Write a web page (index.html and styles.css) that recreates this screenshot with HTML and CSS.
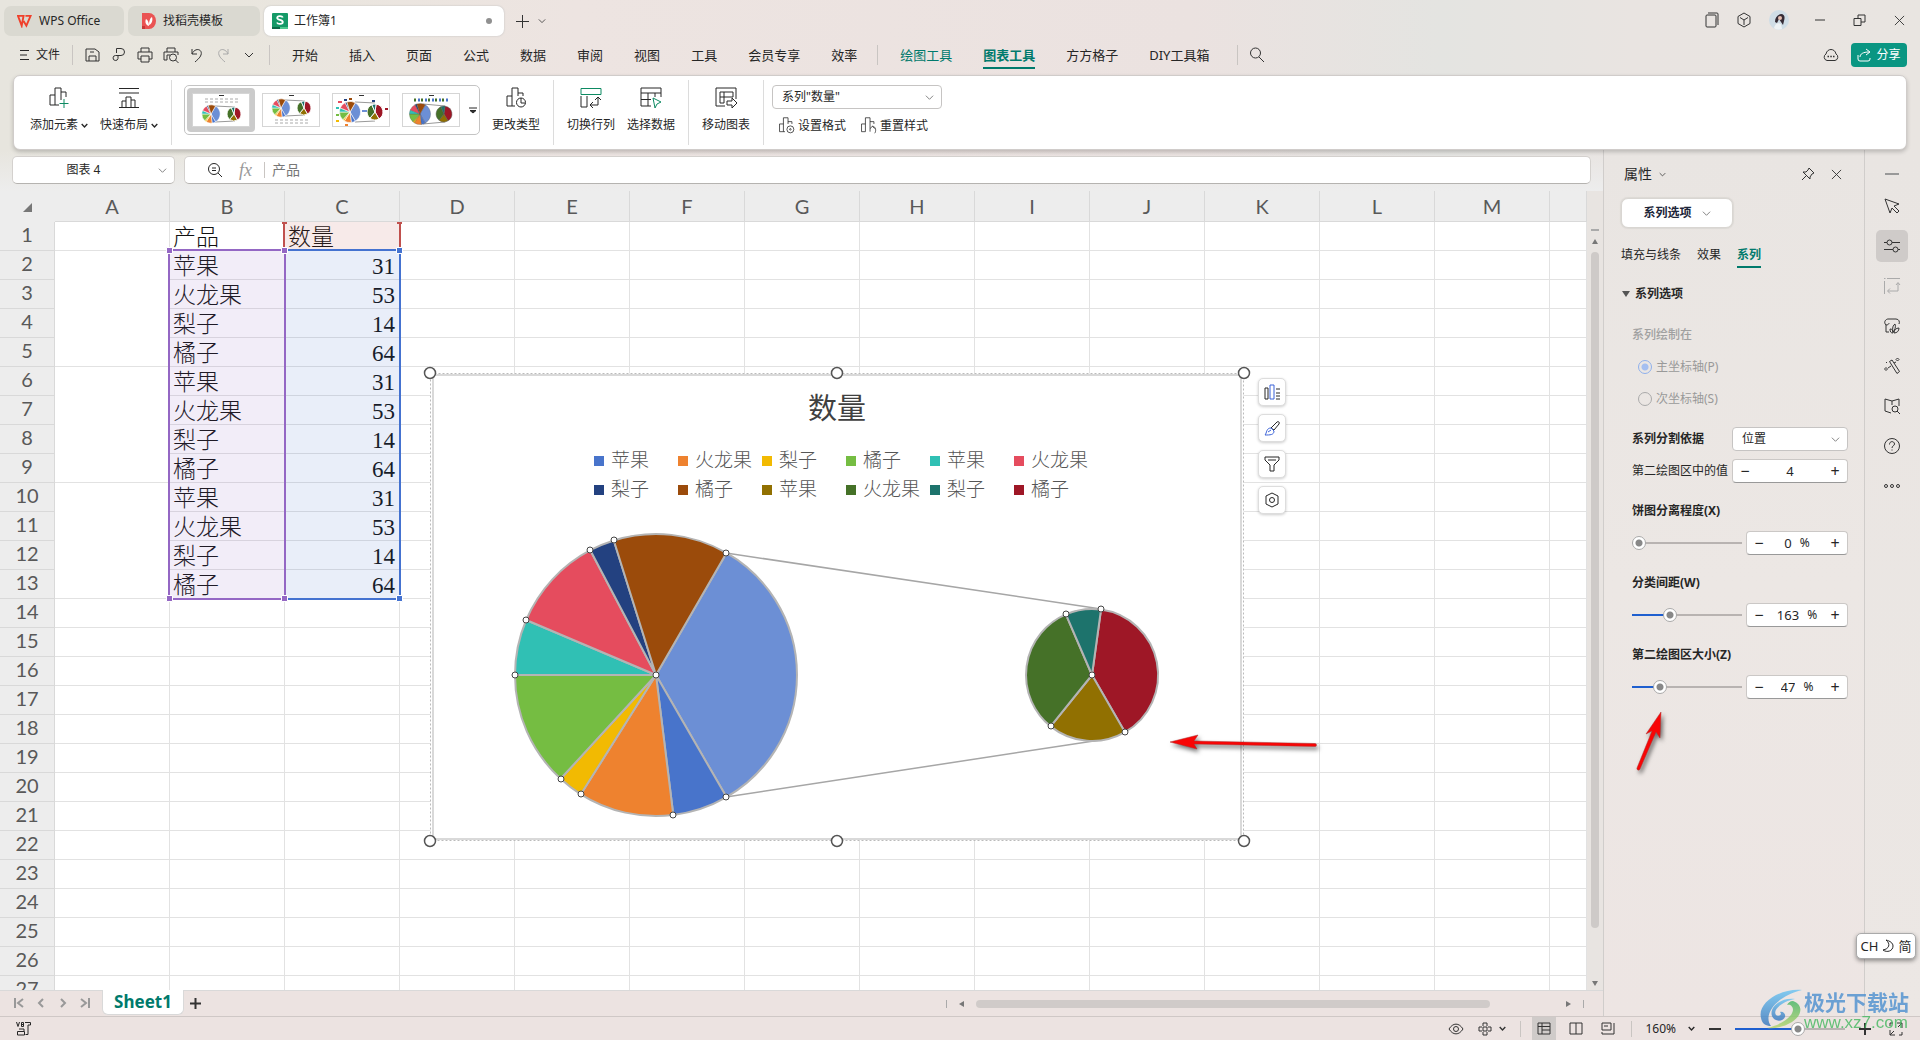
FILE: index.html
```html
<!DOCTYPE html>
<html lang="zh-CN">
<head>
<meta charset="utf-8">
<title>工作簿1 - WPS Office</title>
<link rel="stylesheet" href="styles.css">
</head>
<body>
<svg class="sprite" aria-hidden="true">
  <symbol id="chev" viewBox="0 0 10 10"><path d="M1 3l4 4 4-4"/></symbol>
  <symbol id="x" viewBox="0 0 12 12"><path d="M1 1l10 10M11 1L1 11"/></symbol>
  <symbol id="search" viewBox="0 0 16 16"><circle cx="6.500" cy="6" r="5"/><path d="M10 10l5 5"/></symbol>
  <g id="pie-main">
    <path fill="#6c8fd5" d="M0 0L70.5-122.100A141 141 0 0 1 70.500 122.100z"/>
    <path fill="#4874cb" d="M0 0L70.500 122.100A141 141 0 0 1 17.300 139.900z"/>
    <path fill="#ee822f" d="M0 0L17.300 139.900A141 141 0 0 1-75.200 119.300z"/>
    <path fill="#f2ba02" d="M0 0L-75.200 119.300A141 141 0 0 1-95.400 103.800z"/>
    <path fill="#75bd42" d="M0 0L-95.400 103.800A141 141 0 0 1-141 0z"/>
    <path fill="#30c0b4" d="M0 0L-141 0A141 141 0 0 1-129.800-55z"/>
    <path fill="#e54c5e" d="M0 0L-129.800-55A141 141 0 0 1-65.700-124.800z"/>
    <path fill="#234180" d="M0 0L-65.700-124.800A141 141 0 0 1-42.200-134.500z"/>
    <path fill="#9b4b0b" d="M0 0L-42.200-134.500A141 141 0 0 1 70.500-122.100z"/>
  </g>
  <g id="pie-second">
    <path fill="#9e1726" d="M0 0L9-65.400A66 66 0 0 1 33 57.200z"/>
    <path fill="#917001" d="M0 0L33 57.200A66 66 0 0 1-41.400 51.400z"/>
    <path fill="#457128" d="M0 0L-41.400 51.400A66 66 0 0 1-26.100-60.600z"/>
    <path fill="#1d736c" d="M0 0L-26.100-60.600A66 66 0 0 1 9-65.400z"/>
  </g>
</svg>

<header class="titlebar">
  <nav class="doc-tabs">
    <button class="doc-tab tab-home"><svg class="logo-wps" viewBox="0 0 16 14"><path fill="none" stroke="#f0402b" stroke-width="2" d="M1 1.500h6L5 12 1 1.500zM7 7l3 5 4.500-10.500H9"/></svg>WPS Office</button>
    <button class="doc-tab tab-docer"><svg class="logo-docer" viewBox="0 0 14 16"><path fill="#ea5353" d="M0 0h7a7 8 0 0 1 0 16H0z"/><path fill="#c63838" d="M0 13h3v3H0z"/><path fill="#fff" d="M7 13C3 12 3 8 4 6c2 1 3 4 3 7zM7 12c0-4 1-7 3-8 1 3 0 7-3 8z"/></svg>找稻壳模板</button>
    <button class="doc-tab tab-active"><svg class="logo-sheet" viewBox="0 0 16 16"><rect width="16" height="16" rx="1" fill="#159a68"/><path fill="#0b6b48" d="M0 14h8v2H0z"/><path fill="#4cc98d" d="M8 14h8v2H8z"/><path fill="none" stroke="#fff" stroke-width="1.800" d="M10.800 4.500C10 2.500 5.200 2.500 5.200 5c0 2.300 5.600 1.500 5.600 4 0 2.500-5 2.500-5.800.500"/></svg>工作簿1<i class="dirty"></i></button>
    <button class="icon-btn new-tab" aria-label="新建"><svg width="15" height="15" viewBox="0 0 15 15"><path d="M7.500 1v13M1 7.500h13"/></svg></button>
    <button class="icon-btn" aria-label="标签列表"><svg width="8" height="8"><use href="#chev"/></svg></button>
  </nav>
  <div class="window-tools">
    <button class="icon-btn" aria-label="窗口"><svg width="14" height="16" viewBox="0 0 14 16"><rect x="1" y="3" width="10" height="12" rx="1"/><path d="M3 1h9a1 1 0 0 1 1 1v11"/></svg></button>
    <button class="icon-btn" aria-label="应用"><svg width="16" height="16" viewBox="0 0 16 16"><path d="M8 1l6 3.500v7L8 15l-6-3.500v-7zM4 5.500L8 8l4-2.500M8 8v5"/></svg></button>
    <svg class="avatar" viewBox="0 0 20 20"><circle cx="10" cy="10" r="10" fill="#cfdde6"/><path fill="#352c36" d="M6 12c0-4 2-7 6-8 4 0 4 4 3 7l-1 4-2-3-2-3-2 4z"/><circle cx="11" cy="8" r="2" fill="#e5bfb1"/><path fill="#eef3f5" d="M5 18c1-4 4-6 7-4l1 5c-3 1-6 1-8-1z"/></svg>
    <button class="icon-btn" aria-label="最小化"><svg width="12" height="12" viewBox="0 0 12 12"><path d="M1 6h10"/></svg></button>
    <button class="icon-btn" aria-label="还原"><svg width="13" height="13" viewBox="0 0 13 13"><path d="M1 4.500h7v7H1zM5 4.500V1h7v7H8"/></svg></button>
    <button class="icon-btn" aria-label="关闭"><svg width="11" height="11"><use href="#x"/></svg></button>
  </div>
</header>

<nav class="menubar">
  <button class="file-menu"><svg width="10" height="12" viewBox="0 0 10 12"><path d="M1 1.500h9M1 6h7M1 10.500h9"/></svg>文件</button>
  <i class="sep"></i>
  <div class="quick">
    <button class="icon-btn" aria-label="保存"><svg width="16" height="16" viewBox="0 0 16 16"><path d="M1 14V2h9l4 3v9zM4 14V9h7v5M5 5h4"/></svg></button>
    <button class="icon-btn" aria-label="输出PDF"><svg width="16" height="16" viewBox="0 0 16 16"><path d="M5.500 6V1.500H10a3.500 3.500 0 0 1 0 7H4.500a2.500 2.500 0 1 0 2.500 3V8.500"/></svg></button>
    <button class="icon-btn" aria-label="打印"><svg width="16" height="16" viewBox="0 0 16 16"><path d="M4 5V1h8v4M4 12H1V5h14v7h-3M4 9h8v6H4z"/></svg></button>
    <button class="icon-btn" aria-label="打印预览"><svg width="16" height="16" viewBox="0 0 16 16"><path d="M4 5V1h8v4M4 13H1V5h14v3M4 13V8h3"/><circle cx="10" cy="10.500" r="3.500"/><path d="M12.500 13l3 3"/></svg></button>
    <button class="icon-btn" aria-label="撤销"><svg width="16" height="16" viewBox="0 0 16 16"><path d="M3 2v5h5M3 7c3-7 11-5 9 1-1 3-4 5-6 7"/></svg></button>
    <button class="icon-btn faded" aria-label="恢复"><svg width="16" height="16" viewBox="0 0 16 16"><path d="M13 2v5H8M13 7C10 0 2 2 4 8c1 3 4 5 6 7"/></svg></button>
    <button class="icon-btn" aria-label="更多"><svg width="10" height="16"><use href="#chev"/></svg></button>
  </div>
  <i class="sep"></i>
  <div class="menus">
    <button>开始</button><button>插入</button><button>页面</button><button>公式</button><button>数据</button><button>审阅</button><button>视图</button><button>工具</button><button>会员专享</button><button>效率</button>
  </div>
  <i class="sep"></i>
  <div class="menus context">
    <button class="green">绘图工具</button><button class="green current">图表工具</button><button>方方格子</button><button>DIY工具箱</button>
  </div>
  <i class="sep"></i>
  <button class="icon-btn find" aria-label="搜索"><svg width="16" height="16"><use href="#search"/></svg></button>
  <button class="icon-btn cloud" aria-label="云服务"><svg width="16" height="14" viewBox="0 0 16 14"><path d="M4 12.500a3.500 3.500 0 0 1-1-6.500c1-6 9-6 10 0a3.500 3.500 0 0 1-1 6.500z"/><path stroke-width="1.500" d="M4.500 8.500H6M7.300 8.500h1.500M10 8.500h1.500"/></svg></button>
  <button class="share"><svg width="14" height="14" viewBox="0 0 14 14"><path d="M1 7v4a2 2 0 0 0 2 2h8a2 2 0 0 0 2-2v-1M3 9c0-3 3-5 9-5M9 1l4 3-4 3"/></svg>分享</button>
</nav>

<section class="ribbon">
  <div class="group pair">
    <button class="tool"><svg width="20" height="22" viewBox="0 0 20 22"><path d="M1 18V8h5M6 18V1h6v12M1 18h9M12 5h5v5"/><path class="g" d="M15 12v9M10.500 16.500h9"/></svg><span>添加元素<svg class="c" width="7" height="7"><use href="#chev"/></svg></span></button>
    <button class="tool"><svg width="20" height="22" viewBox="0 0 20 22"><path d="M0 1.500h20M0 6h20M0 20.500h20M3 20v-6h4M7 20V10h5v10M12 13h4v7"/></svg><span>快速布局<svg class="c" width="7" height="7"><use href="#chev"/></svg></span></button>
  </div>
  <div class="group styles">
    <div class="gallery">
      <button class="style-item selected" aria-label="样式1"><svg viewBox="0 0 56 32"><path class="cap" d="M26 1.500h5"/><path class="leg" d="M12 5h34M12 8h34"/><path class="link" d="M22 12l20 1M22 28l20-1"/><use href="#pie-main" transform="translate(18 20) scale(.065)"/><use href="#pie-second" transform="translate(41 20) scale(.105)"/></svg></button>
      <button class="style-item" aria-label="样式2"><svg viewBox="0 0 56 32"><path class="cap" d="M26 1.500h5"/><path class="leg" d="M12 26h34M12 29h34"/><path class="link" d="M22 6l20 1M22 22l20-1"/><use href="#pie-main" transform="translate(18 14) scale(.065)"/><use href="#pie-second" transform="translate(41 14) scale(.105)"/></svg></button>
      <button class="style-item" aria-label="样式3"><svg viewBox="0 0 56 32"><path class="cap" d="M26 1.500h5"/><path class="link" d="M22 8l20 1M22 28l20-1"/><use href="#pie-main" transform="translate(17 18) scale(.075)"/><use href="#pie-second" transform="translate(42 18) scale(.12)"/><path stroke="#e54c5e" stroke-width="2" d="M5 8h4"/><path stroke="#9b4b0b" stroke-width="2" d="M16 5h3"/><path stroke="#234180" stroke-width="2" d="M11 6h3M39 7h3"/><path stroke="#30c0b4" stroke-width="2" d="M3 14h3"/><path stroke="#ee822f" stroke-width="2" d="M12 31h3"/><path stroke="#f2ba02" stroke-width="2" d="M3 27h3"/><path stroke="#75bd42" stroke-width="2" d="M3 21h3"/><path stroke="#6c8fd5" stroke-width="2" d="M29 17h5"/><path stroke="#9e1726" stroke-width="2" d="M52 15h3"/></svg></button>
      <button class="style-item" aria-label="样式4"><svg class="flat" viewBox="0 0 56 32"><path class="cap" d="M26 1.500h5"/><path class="leg m1" d="M11 6h35"/><path class="leg m2" d="M15 6h30"/><path class="link" d="M20 10l22 2M20 30l22-2"/><use href="#pie-main" transform="translate(17 20) scale(.075)"/><use href="#pie-second" transform="translate(41 20) scale(.12)"/></svg></button>
      <button class="more" aria-label="更多样式"><svg width="8" height="7" viewBox="0 0 8 7"><path d="M0 1h8M1 3.500h6L4 6z"/></svg></button>
    </div>
    <button class="tool"><svg width="20" height="22" viewBox="0 0 20 22"><path d="M1 19V9h5M6 19V1h6v8M1 19h8M12 6h5v3"/><circle cx="15" cy="15.500" r="4.500"/><path d="M15 11v5h4"/></svg><span>更改类型</span></button>
  </div>
  <div class="group two">
    <button class="tool"><svg width="22" height="22" viewBox="0 0 22 22"><path class="g" d="M1 1.500h20v6H1z"/><path d="M1 9v11h6V9M11 18h7v-7M15 13l3-3 3 3M13 15l-3 3 3 3"/></svg><span>切换行列</span></button>
    <button class="tool"><svg width="22" height="22" viewBox="0 0 22 22"><path d="M11 19H1V1h20v9M1 6h20M8 6v13M1 12.500h10M15 6v4"/><path class="g" d="M13 11l8 4-4 2-2 4z"/></svg><span>选择数据</span></button>
  </div>
  <div class="group one">
    <button class="tool"><svg width="22" height="22" viewBox="0 0 22 22"><path d="M10 19H1V1h20v11M5 5h13v5M5 5v11h4V5M5 10h13M12 14h5v-3l5 5-5 5v-3h-5z"/></svg><span>移动图表</span></button>
  </div>
  <div class="group last">
    <select class="series" aria-label="图表元素"><option>系列"数量"</option></select>
    <div class="minis">
      <button><svg width="17" height="17" viewBox="0 0 20 22"><path d="M1 19V9h5M6 19V1h6v8M1 19h7M12 6h5v3"/><circle cx="15" cy="16" r="4.500"/><circle cx="15" cy="16" r="1"/></svg>设置格式</button>
      <button><svg width="17" height="17" viewBox="0 0 20 22"><path d="M1 19V9h5M6 19V1h6v18M1 19h5M12 6h5v3M12 15l3-3 3 3M15 12c5 0 5 7 3 9"/></svg>重置样式</button>
    </div>
  </div>
</section>

<div class="workspace">
  <main class="book">
    <div class="formula-row">
      <button class="name-box"><span>图表 4</span><svg width="9" height="9"><use href="#chev"/></svg></button>
      <div class="formula">
        <svg class="zoom-ico" width="16" height="16" viewBox="0 0 16 16"><circle cx="7" cy="7" r="5.500"/><path d="M11 11l4 4M5 6h4M5 8.500h4"/></svg>
        <span class="fx">fx</span><i class="sep"></i>
        <input value="产品" aria-label="编辑栏">
      </div>
    </div>
    <div class="grid-row">
      <div class="sheet">
        <table class="cells">
          <colgroup><col class="col-head"><col class="col"><col class="col"><col class="col"><col class="col"><col class="col"><col class="col"><col class="col"><col class="col"><col class="col"><col class="col"><col class="col"><col class="col"><col class="col"><col></colgroup>
          <thead><tr><th class="corner"><i></i></th><th>A</th><th>B</th><th>C</th><th>D</th><th>E</th><th>F</th><th>G</th><th>H</th><th>I</th><th>J</th><th>K</th><th>L</th><th>M</th><th></th></tr></thead>
          <tbody id="rows"></tbody>
        </table>
        <svg class="ranges" width="239" height="386" viewBox="165 216 239 386">
          <rect x="284" y="222" width="115" height="28" fill="#c0504d" fill-opacity=".12"/>
          <rect x="170" y="251" width="114" height="347" fill="#9467c4" fill-opacity=".12"/>
          <rect x="285" y="251" width="114" height="347" fill="#4874cb" fill-opacity=".12"/>
          <path stroke="#c0504d" stroke-width="2" fill="none" d="M284 222v27M400 222v27"/>
          <path fill="#c0504d" d="M282 222h5v2h-5zM397 222h5v2h-5z"/>
          <path stroke="#4472d0" stroke-width="2" fill="none" d="M285 250h115V599H285"/>
          <path stroke="#9467c4" stroke-width="2" fill="none" d="M169 250h116V599H169z"/>
          <path stroke="#fff" fill="#9467c4" d="M166.500 247.500h6v6h-6zM281.500 247.500h6v6h-6zM166.500 595.500h6v6h-6zM281.500 595.500h6v6h-6z"/>
          <path stroke="#fff" fill="#4472d0" d="M396.500 247.500h6v6h-6zM396.500 595.500h6v6h-6z"/>
        </svg>
        <figure class="chart">
          <svg class="plot" viewBox="422 365 830 484">
            <rect x="430.500" y="373.500" width="813" height="467" fill="#fff" stroke="#bbb" stroke-dasharray="2 2"/>
            <rect x="433" y="375" width="808" height="464" fill="#fff" stroke="#d9d9d9" stroke-width="2"/>
            <path stroke="#a6a6a6" stroke-width="1.500" d="M726 553L1101 609M726 797L1107 739"/>
            <g stroke="#b4b4b4" stroke-width="2" stroke-linejoin="round"><use href="#pie-main" x="656" y="675"/><use href="#pie-second" x="1092" y="675"/></g>
            <g class="points"><circle cx="656" cy="675" r="3"/><circle cx="726" cy="797" r="3"/><circle cx="673" cy="815" r="3"/><circle cx="581" cy="794" r="3"/><circle cx="561" cy="779" r="3"/><circle cx="515" cy="675" r="3"/><circle cx="526" cy="620" r="3"/><circle cx="590" cy="550" r="3"/><circle cx="614" cy="540" r="3"/><circle cx="726" cy="553" r="3"/><circle cx="1092" cy="675" r="3"/><circle cx="1101" cy="609" r="3"/><circle cx="1125" cy="732" r="3"/><circle cx="1051" cy="726" r="3"/><circle cx="1066" cy="614" r="3"/></g>
            <g class="handles"><circle cx="430" cy="373" r="5.500"/><circle cx="837" cy="373" r="5.500"/><circle cx="1244" cy="373" r="5.500"/><circle cx="430" cy="841" r="5.500"/><circle cx="837" cy="841" r="5.500"/><circle cx="1244" cy="841" r="5.500"/></g>
            <path class="arrow" d="M1170 742l28-7-4 6 121 2.500a1.500 1.500 0 0 1 0 3L1194 744l3 5z"/>
          </svg>
          <figcaption>数量</figcaption>
          <ul class="legend">
            <li class="c1">苹果</li><li class="c2">火龙果</li><li class="c3">梨子</li><li class="c4">橘子</li><li class="c5">苹果</li><li class="c6">火龙果</li>
            <li class="c7">梨子</li><li class="c8">橘子</li><li class="c9">苹果</li><li class="c10">火龙果</li><li class="c11">梨子</li><li class="c12">橘子</li>
          </ul>
        </figure>
        <div class="chart-tools">
          <button aria-label="图表元素"><svg width="16" height="16" viewBox="0 0 16 16"><path d="M1 4h3v11H1z"/><path class="b" d="M6 1h4v14H6z"/><path d="M12 5h4M12 9h4M12 12h4M12 15h4"/></svg></button>
          <button aria-label="图表样式"><svg width="16" height="16" viewBox="0 0 16 16"><path d="M7 8l6-6c1-1 3 0 2 2l-5 6z"/><path class="b" d="M7 8l3 3c0 4-4 4-9 4 2-2 1-7 6-7zM4 12l3-2"/></svg></button>
          <button aria-label="筛选"><svg width="16" height="16" viewBox="0 0 16 16"><path d="M1 1h14v3l-5 5v6H6V9L1 4zM4 4h8"/></svg></button>
          <button aria-label="设置"><svg width="16" height="16" viewBox="0 0 16 16"><path d="M8 1l6 3v8l-6 3-6-3V4z"/><circle cx="8" cy="8" r="2.500"/></svg></button>
        </div>
      </div>
      <div class="vscroll"><i class="split"></i><i class="up"></i><i class="thumb"></i><i class="down"></i></div>
    </div>
    <div class="sheet-tabs">
      <div class="sheet-nav">
        <svg width="10" height="12" viewBox="0 0 10 12"><path d="M1 1v10M9 2L4 6l5 4"/></svg><svg width="10" height="12" viewBox="0 0 10 12"><path d="M7 2L3 6l4 4"/></svg><svg width="10" height="12" viewBox="0 0 10 12"><path d="M3 2l4 4-4 4"/></svg><svg width="10" height="12" viewBox="0 0 10 12"><path d="M9 1v10M1 2l5 4-5 4"/></svg>
      </div>
      <button class="sheet-tab">Sheet1</button>
      <button class="icon-btn add" aria-label="新建工作表"><svg width="11" height="11" viewBox="0 0 11 11"><path d="M5.500 0v11M0 5.500h11"/></svg></button>
      <div class="hscroll"><i class="tick"></i><i class="left"></i><i class="thumb"></i><i class="right"></i><i class="tick"></i></div>
    </div>
  </main>

  <aside class="panel">
    <header><h2>属性<svg width="7" height="7"><use href="#chev"/></svg></h2>
      <div><button class="icon-btn" aria-label="固定"><svg width="14" height="14" viewBox="0 0 14 14"><path d="M8 1l5 5-2 1-2 3v2L2 5h3l2-2zM5 9l-4 4"/></svg></button><button class="icon-btn" aria-label="关闭"><svg width="11" height="11"><use href="#x"/></svg></button></div>
    </header>
    <button class="scope">系列选项<svg width="9" height="9"><use href="#chev"/></svg></button>
    <nav class="panel-tabs"><button>填充与线条</button><button>效果</button><button class="current">系列</button></nav>
    <h3><i></i>系列选项</h3>
    <div class="form">
      <div class="line dim">系列绘制在</div>
      <label class="line radio"><input type="radio" name="axis" checked disabled>主坐标轴(P)</label>
      <label class="line radio"><input type="radio" name="axis" disabled>次坐标轴(S)</label>
      <div class="line split-by"><label class="bold" for="split">系列分割依据</label><select id="split"><option>位置</option></select></div>
      <div class="line"><label for="count">第二绘图区中的值</label><div class="spin wide"><button>−</button><span class="val"><input id="count" value="4"></span><button>+</button></div></div>
      <label class="line cap bold" for="sep">饼图分离程度(X)</label>
      <div class="line"><input type="range" aria-label="饼图分离程度" min="0" max="100" value="0" style="--v:0%"><div class="spin"><button>−</button><span class="val"><input id="sep" value="0">%</span><button>+</button></div></div>
      <label class="line cap bold" for="gap">分类间距(W)</label>
      <div class="line"><input type="range" aria-label="分类间距" min="0" max="500" value="163" style="--v:33%"><div class="spin"><button>−</button><span class="val"><input id="gap" value="163">%</span><button>+</button></div></div>
      <label class="line cap bold" for="size">第二绘图区大小(Z)</label>
      <div class="line"><input type="range" aria-label="第二绘图区大小" min="5" max="200" value="47" style="--v:22%"><div class="spin"><button>−</button><span class="val"><input id="size" value="47">%</span><button>+</button></div></div>
    </div>
    <svg class="pointer" width="32" height="64" viewBox="0 0 32 64"><path class="arrow" d="M25 2l-1 26-4-6L4 59a1.500 1.500 0 0 1-3-1L16 21l-6 3z"/></svg>
  </aside>

  <nav class="rail">
    <button class="icon-btn fold" aria-label="折叠"><svg viewBox="0 0 16 16"><path stroke="#999" stroke-width="2" d="M1 8h14"/></svg></button>
    <button class="icon-btn" aria-label="选择"><svg viewBox="0 0 16 16"><path d="M1 1l14 5-5 2 5 5-2 2-5-5-2 5z"/></svg></button>
    <button class="icon-btn on" aria-label="属性"><svg viewBox="0 0 16 16"><path d="M0 4.500h3M8 4.500h8M0 11.500h9M14 11.500h2"/><circle cx="5.500" cy="4.500" r="2.500"/><circle cx="11.500" cy="11.500" r="2.500"/></svg></button>
    <button class="icon-btn faded" aria-label="切换"><svg viewBox="0 0 16 16"><path d="M.500 3v13M3 .500h13M0 .500h1.500M4 13h10V5M12 7l2-2.500L16 7M6 10.500L3.500 13 6 15.500"/></svg></button>
    <button class="icon-btn" aria-label="推荐图表"><svg viewBox="0 0 16 16"><path d="M5 14H2V7C-1 4 2 1 4 1h8c3 0 4 3 3 5M2 7c2 0 3-1 3-2"/><path d="M6 11c2 0 3 1 3 4-2 0-3-1-3-4zM9 14c-1-4 0-7 2-8 1 3 0 6-2 8zM10 15c0-3 2-5 5-5 0 3-2 5-5 5z"/></svg></button>
    <button class="icon-btn" aria-label="智能工具"><svg viewBox="0 0 16 16"><path d="M5.500 3.500L8 2l7.500 11.500-2.500 2zM2 9.500l1.500 1.500L2 12.500.500 11zM13.500 0L15 1.500 13.500 3 12 1.500zM4 10l3-2M10 5l2-1M2 4l1 1"/></svg></button>
    <button class="icon-btn" aria-label="查阅"><svg viewBox="0 0 16 16"><path d="M8 3v4M8 3L1 1v12l6 2M8 3l7-2v7"/><circle cx="11" cy="11" r="3"/><path d="M13 13l3 3"/></svg></button>
    <button class="icon-btn" aria-label="帮助"><svg viewBox="0 0 16 16"><circle cx="8" cy="8" r="7.500"/><path d="M5.500 6.500c0-4 5-3.500 5-.5 0 2-2.500 1.500-2.500 4M8 11.500v1"/></svg></button>
    <button class="icon-btn" aria-label="更多"><svg viewBox="0 0 16 16"><circle cx="2" cy="8" r="1.500"/><circle cx="8" cy="8" r="1.500"/><circle cx="14" cy="8" r="1.500"/></svg></button>
  </nav>
</div>

<footer class="status">
  <svg class="vb" width="15" height="14" viewBox="0 0 15 14"><path d="M.500 0l1.500 4.500L3.500 0M5.500.500h2v4h-2zM5.500 2.500h2M9 .500h5.500V3H12v9.500H9.500M3 7h5v2M1.500 9.500h7v3.500h-7z"/></svg>
  <div class="status-right">
    <button class="icon-btn" aria-label="护眼"><svg width="16" height="12" viewBox="0 0 16 12"><path d="M1 6c4-6.500 10-6.500 14 0-4 6.500-10 6.500-14 0z"/><circle cx="8" cy="6" r="2.500"/></svg></button>
    <button class="icon-btn move" aria-label="阅读模式"><svg width="14" height="14" viewBox="0 0 14 14"><path d="M5 4V1h4v3M5 10v3h4v-3M4 5H1v4h3M10 5h3v4h-3M5 5h4v4H5z"/></svg><svg class="c" width="7" height="7"><use href="#chev"/></svg></button>
    <i class="sep"></i>
    <button class="icon-btn view on" aria-label="普通视图"><svg width="14" height="13" viewBox="0 0 14 13"><path d="M1 1h12v11H1zM5 1v11M1 4.500h12M5 8h8"/></svg></button>
    <button class="icon-btn view" aria-label="页面布局"><svg width="14" height="13" viewBox="0 0 14 13"><path d="M1 1h12v11H1zM7 1v11"/></svg></button>
    <button class="icon-btn view" aria-label="分页预览"><svg width="14" height="13" viewBox="0 0 14 13"><path d="M1 1h9v7H1zM13 1v11H1v-2M3 4h4"/></svg></button>
    <i class="sep"></i>
    <button class="zoom-val">160%<svg class="c" width="7" height="7"><use href="#chev"/></svg></button>
    <button class="icon-btn bold-ico" aria-label="缩小"><svg width="12" height="12" viewBox="0 0 12 12"><path d="M0 6h12"/></svg></button>
    <input class="zoom-range" type="range" aria-label="缩放" min="0" max="100" value="58" style="--v:58%">
    <button class="icon-btn bold-ico" aria-label="放大"><svg width="12" height="12" viewBox="0 0 12 12"><path d="M0 6h12M6 0v12"/></svg></button>
    <button class="icon-btn full" aria-label="全屏"><svg width="14" height="14" viewBox="0 0 14 14"><path d="M8 1h5v5M13 1L9 5M6 13H1V8M1 13l4-4M1 4V1h3M13 10v3h-3"/></svg></button>
  </div>
</footer>

<div class="ime">CH<svg width="12" height="14" viewBox="0 0 12 14"><path d="M4 1c5 4 3 9-3 10 4 3 10 1 10-4 0-3-3-5-7-6z"/></svg>简</div>
<div class="watermark">
  <svg width="44" height="42" viewBox="0 0 44 42"><defs><linearGradient id="wm" x2="0" y2="1"><stop stop-color="#68c4f3"/><stop offset="1" stop-color="#3575bd"/></linearGradient><linearGradient id="wg" x2="0" y2="1"><stop stop-color="#42b564"/><stop offset="1" stop-color="#b5d56b"/></linearGradient></defs><path fill="url(#wm)" d="M42 1C20-1-3 14 1 29c1 6 5 8 10 8C3 27 14 8 42 1z"/><path fill="url(#wm)" d="M35 10C20 8 9 19 12 27c2 6 11 6 13 1 1-3-2-6-5-5 3 3-2 5-4 3-4-6 8-14 19-16z"/><path fill="url(#wg)" d="M33 12c10 3 10 14-1 21-8 5-18 7-25 6 13-3 25-10 26-18 0-4-3-6-6-5 1-2 3-4 6-4z"/></svg>
  <p><b>极光下载站</b><span>www.xz7.com</span></p>
</div>
<script src="app.js"></script>
</body>
</html>
```
FILE: app.js
```js
const products = ['苹果', '火龙果', '梨子', '橘子'];
const amounts = [31, 53, 14, 64];
const body = document.getElementById('rows');

for (let r = 1; r <= 27; r++) {
  const tr = document.createElement('tr');
  const head = document.createElement('th');
  head.textContent = r;
  tr.append(head);
  const merged = r >= 2 && r <= 13;
  for (let c = 0; c < 14; c++) {
    if (c === 0 && merged && (r - 2) % 4 !== 0) continue;
    const td = document.createElement('td');
    if (c === 0 && merged) td.rowSpan = 4;
    if (c === 1 && r === 1) td.textContent = '产品';
    if (c === 2 && r === 1) td.textContent = '数量';
    if (merged && c === 1) td.textContent = products[(r - 2) % 4];
    if (merged && c === 2) {
      td.textContent = amounts[(r - 2) % 4];
      td.className = 'num';
    }
    tr.append(td);
  }
  body.append(tr);
}
```
FILE: styles.css
```css
* { box-sizing: border-box; }
body {
  margin: 0;
  height: 100vh;
  display: flex;
  flex-direction: column;
  overflow: hidden;
  position: relative;
  font: 12px/16px "Noto Sans", "Noto Sans CJK SC", sans-serif;
  color: #262626;
  background: linear-gradient(90deg, #e7e5de 0, #e9e6de 12%, #ede4e1 30%, #ebe2e0 62%, #e4e4e1 75%, #e9e4e1 85%, #e9e5e1 100%);
}
button, input, select { font: inherit; color: inherit; margin: 0; }
button { background: none; border: 0; padding: 0; display: flex; align-items: center; justify-content: center; white-space: nowrap; }
svg { fill: none; stroke: currentColor; flex: none; }
i { display: block; flex: none; }
.sprite { position: absolute; width: 0; height: 0; }
.icon-btn { color: #333; }
.faded { color: #aaa; }
.c { stroke-width: 2; }
.sep { width: 1px; height: 20px; background: #c9c5c2; }

.titlebar { display: flex; justify-content: space-between; height: 40px; padding: 6px 9px 0 4px; }
.doc-tabs { display: flex; gap: 4px; height: 30px; }
.doc-tab { justify-content: flex-start; height: 30px; border-radius: 7px; background: #dad9d1; }
.doc-tab svg { stroke: none; }
.tab-home { width: 120px; padding-left: 13px; gap: 7px; }
.tab-docer { width: 132px; padding-left: 14px; gap: 7px; }
.tab-active { width: 240px; padding: 0 12px 0 8px; gap: 6px; background: #fff; box-shadow: 0 0 2px #bbb; }
.logo-wps { width: 15px; height: 14px; }
.logo-docer { width: 14px; height: 16px; }
.logo-sheet { width: 16px; height: 16px; }
.dirty { width: 6px; height: 6px; border-radius: 50%; background: #909090; margin-left: auto; }
.new-tab { margin-left: 7px; margin-right: 4px; }
.window-tools { display: flex; align-items: center; gap: 17px; height: 28px; }
.window-tools .icon-btn:nth-of-type(n+3) { width: 23px; }
.avatar { width: 20px; height: 20px; stroke: none; margin-right: 2px; }

.menubar { display: flex; align-items: center; height: 35px; padding: 0 13px 5px 19px; }
.file-menu { gap: 7px; }
.menubar > .sep:nth-of-type(1) { margin: 0 12px; }
.quick { display: flex; gap: 10px; }
.quick .icon-btn { width: 16px; }
.quick + .sep { margin: 0 22px 0 12px; }
.menus { display: flex; gap: 31px; font-size: 13px; margin-right: 20px; }
.context { margin: 0 28px 0 22px; }
.menus button { height: 24px; }
.green { color: #007a6c; }
.menus .current { font-weight: 700; box-shadow: 0 2px #007a6c; }
.find { margin-left: 11px; }
.cloud { margin-left: auto; margin-right: 12px; }
.share { width: 56px; height: 24px; gap: 5px; border-radius: 4px; background: #0a9682; color: #fff; }

.ribbon { display: flex; flex: none; height: 75px; margin: 0 13px 0 13px; padding: 4px 0; background: #fff; border: 1px solid #d0ccca; border-radius: 7px; box-shadow: 0 2px 4px #0003; z-index: 2; }
.group { display: flex; border-right: 1px solid #dcdcdc; }
.tool { flex-direction: column; justify-content: flex-start; gap: 8px; padding-top: 7px; }
.tool span { display: flex; align-items: center; gap: 3px; }
.g { stroke: #0d8a62; }
.pair { width: 158px; padding-left: 16px; gap: 12px; }
.styles { width: 382px; padding: 0 12px; gap: 12px; }
.gallery { display: flex; flex: none; align-items: center; width: 296px; height: 50px; margin-top: 5px; padding-left: 2px; gap: 2px; border: 1px solid #c4c4c4; border-radius: 5px; }
.style-item { flex: none; width: 68px; height: 44px; border-radius: 4px; }
.style-item svg { width: 56px; height: 32px; background: #fff; box-shadow: 0 0 0 1px #d5d5d5; stroke: #fff; stroke-width: 8; }
.style-item .flat { stroke: #555; stroke-width: 4; }
.selected { background: #cbcbcb; }
.style-item .cap { stroke: #333; stroke-width: 1; }
.style-item .link { stroke: #999; stroke-width: 1; }
.style-item .leg { stroke: #aaa; stroke-width: 1; stroke-dasharray: 3 2; }
.style-item .m1 { stroke: #457128; stroke-width: 3; stroke-dasharray: 2 5; }
.style-item .m2 { stroke: #4874cb; stroke-width: 3; stroke-dasharray: 2 5; }
.more { width: 12px; }
.more svg { fill: #333; }
.two { width: 135px; padding-left: 13px; gap: 12px; }
.one { width: 75px; padding-left: 13px; }
.last { flex-direction: column; border: 0; padding: 5px 8px; gap: 8px; }
select { appearance: none; background: #fff url("data:image/svg+xml,%3Csvg xmlns='http://www.w3.org/2000/svg' width='9' height='9' viewBox='0 0 10 10'%3E%3Cpath d='M1 3l4 4 4-4' fill='none' stroke='%23777'/%3E%3C/svg%3E") no-repeat right 7px center; border: 1px solid #c6c4c3; border-radius: 4px; padding: 0 9px; height: 24px; }
.series { width: 170px; }
.minis { display: flex; gap: 14px; padding-left: 6px; }
.minis button { gap: 3px; }

.workspace { display: flex; flex: 1; min-height: 0; }
.book { flex: 1; min-width: 0; display: flex; flex-direction: column; }
.formula-row { display: flex; gap: 9px; padding: 6px 12px 7px; background: linear-gradient(#0000, #ededed); }
.name-box, .formula { height: 28px; background: #fff; border: 1px solid #d4d1ce; border-bottom-color: #b5b3b0; border-radius: 5px; }
.name-box { width: 163px; padding-right: 7px; }
.name-box span { flex: 1; padding-right: 4px; }
.name-box svg, .scope svg { stroke: #777; }
.formula { flex: 1; display: flex; align-items: center; padding-left: 22px; }
.fx { font: italic 18px/20px "Liberation Serif", serif; color: #999; margin: 0 12px 0 16px; }
.formula .sep { height: 16px; }
.formula input { flex: 1; border: 0; padding: 0 7px; font-size: 14px; color: #777; background: none; }

.grid-row { flex: 1; display: flex; min-height: 0; }
.sheet { flex: 1; min-width: 0; position: relative; overflow: hidden; background: #fff; }
.cells { width: 100%; table-layout: fixed; border-collapse: separate; border-spacing: 0; }
.col-head { width: 55px; }
.col { width: 115px; }
.cells th { font: 400 20px/24px Lato, sans-serif; color: #595959; background: #ededed; padding: 0; border: solid #d9d9d9; border-width: 0 1px 1px 0; text-align: center; }
.cells thead th { height: 31px; }
.cells thead .corner { border-color: #ededed; }
.corner i { margin: 3px 0 0 23px; border: solid #0000; border-width: 0 0 9px 9px; border-bottom-color: #777; width: 0; }
.cells tbody th { height: 29px; padding-bottom: 3px; line-height: 25px; }
.cells td { height: 29px; padding: 3px 4px 0 3px; font: 300 23px/25px "Liberation Serif", "Noto Sans CJK SC", serif; color: #111; border: solid #e2e2e2; border-width: 0 1px 1px 0; white-space: nowrap; overflow: hidden; }
.cells .num { text-align: right; }
.ranges { position: absolute; left: 165px; top: 25px; stroke: none; }

.chart { position: absolute; left: 422px; top: 174px; width: 830px; height: 484px; margin: 0; font-family: "Liberation Serif", "Noto Sans CJK SC", serif; }
.plot { position: absolute; inset: 0; width: 100%; height: 100%; overflow: visible; stroke: none; }
.points { fill: #fff; stroke: #444; }
.handles { fill: #fff; stroke: #555; stroke-width: 1.5; }
.arrow { fill: #f80505; stroke: #a33; stroke-width: .5; filter: drop-shadow(2px 3px 2px #0008); }
.chart figcaption { position: relative; padding-top: 24px; text-align: center; font-size: 29px; line-height: 40px; color: #404040; }
.legend { position: relative; display: grid; grid-template-columns: repeat(6, 84px); row-gap: 5px; list-style: none; margin: 20px 0 0 172px; padding: 0; font-size: 19px; font-weight: 300; line-height: 24px; color: #555; }
.legend li { display: flex; align-items: center; gap: 7px; white-space: nowrap; }
.legend li::before { content: ""; flex: none; width: 10px; height: 10px; background: var(--c); }
.c1 { --c: #4874cb; } .c2 { --c: #ee822f; } .c3 { --c: #f2ba02; } .c4 { --c: #75bd42; } .c5 { --c: #30c0b4; } .c6 { --c: #e54c5e; }
.c7 { --c: #234180; } .c8 { --c: #9b4b0b; } .c9 { --c: #917001; } .c10 { --c: #457128; } .c11 { --c: #1d736c; } .c12 { --c: #9e1726; }
.chart-tools { position: absolute; left: 1258px; top: 187px; display: grid; gap: 8px; }
.chart-tools button { width: 28px; height: 28px; background: #fff; border: 1px solid #ddd; border-radius: 5px; box-shadow: 0 1px 3px #0003; }
.chart-tools .b { stroke: #3b63d8; }

.vscroll { width: 16px; display: flex; flex-direction: column; align-items: center; margin-top: 31px; padding: 7px 0 4px; gap: 8px; }
.split { width: 8px; height: 2px; background: #aaa; }
.up, .down { border: 3px solid #0000; border-top: 0; border-bottom: 5px solid #777; }
.down { border-bottom: 0; border-top: 5px solid #777; }
.vscroll .thumb { flex: 1; width: 8px; border-radius: 4px; background: #cecac8; margin: 0 0 45px; }
.sheet-tabs { display: flex; align-items: flex-start; height: 26px; border-top: 1px solid #d9d9d9; background: #ece3e1; }
.sheet-nav { display: flex; align-items: center; gap: 12px; height: 24px; padding: 0 12px 0 14px; color: #999; stroke-width: 2; }
.sheet-tab { width: 82px; height: 25px; margin-top: -1px; background: #fff; border: 1px solid #d9d9d9; border-top: 0; border-radius: 0 0 6px 6px; font-size: 17px; font-weight: 700; color: #007a6c; }
.add { height: 24px; margin-left: 6px; stroke-width: 2; }
.hscroll { display: flex; align-items: center; gap: 12px; width: 638px; height: 26px; margin-left: auto; margin-right: 19px; }
.tick { width: 1px; height: 8px; background: #aaa; }
.left, .right { border: 3px solid #0000; border-left: 0; border-right: 5px solid #777; }
.right { border-right: 0; border-left: 5px solid #777; }
.hscroll .thumb { flex: 1; height: 8px; border-radius: 4px; background: #d0cbc9; margin-right: 64px; }

.panel { position: relative; width: 261px; border-left: 1px solid #d0cdcb; padding: 14px 16px 0 17px; background: linear-gradient(#e9e5e2, #ece7e4 50%, #ede5e3); }
.panel header { display: flex; justify-content: space-between; align-items: center; height: 20px; padding-right: 6px; }
.panel header div { display: flex; gap: 16px; }
h2, h3 { display: flex; align-items: center; margin: 0; }
h2 { font-size: 14px; font-weight: 400; gap: 7px; line-height: 20px; padding-left: 3px; }
.scope { width: 112px; height: 30px; margin-top: 14px; gap: 10px; background: #fff; border: 1px solid #d9d6d2; border-radius: 7px; box-shadow: 0 0 1px 1px #dcd9d5; font-weight: 700; color: #1c2538; }
.panel-tabs { display: flex; gap: 16px; margin-top: 16px; }
.panel-tabs button { height: 22px; }
.panel-tabs .current { color: #007a6c; font-weight: 700; box-shadow: 0 2px #007a6c; }
h3 { margin-top: 16px; gap: 5px; font-size: 12px; line-height: 24px; font-weight: 700; }
h3 i { margin-left: 1px; border: 4px solid #0000; border-top: 6px solid #555; border-bottom: 0; }
.form { margin-top: 13px; padding-left: 11px; }
.line { display: flex; align-items: center; justify-content: space-between; height: 32px; white-space: nowrap; }
.bold { font-weight: 700; }
.dim { color: #a0a0a0; font-weight: 500; }
.radio { justify-content: flex-start; gap: 4px; padding-left: 6px; color: #999; }
.radio input { appearance: none; width: 14px; height: 14px; border: 1px solid #aaa; border-radius: 50%; }
.radio input:checked { border-color: #8fb0ec; background: radial-gradient(#a5bff0 0 3px, #0000 4px); }
.split-by { height: 40px; margin-bottom: -4px; margin-top: 4px; }
.split-by select { width: 116px; }
.line.cap { height: 40px; padding-top: 8px; }
.spin { display: flex; width: 102px; height: 24px; background: #fff; border: 1px solid #cbc8c6; border-bottom-color: #999; border-radius: 4px; }
.wide { width: 116px; }
.spin button { width: 24px; font-size: 16px; }
.val { flex: 1; display: flex; align-items: center; justify-content: center; gap: 8px; }
.val input { border: 0; padding: 0; background: none; field-sizing: content; font-size: 13px; line-height: 16px; }
input[type=range] { appearance: none; width: 110px; height: 14px; background: linear-gradient(90deg, #1f5fcf var(--v), #b8b3b1 var(--v)) center / 100% 2px no-repeat; }
input[type=range]::-webkit-slider-thumb { appearance: none; width: 14px; height: 14px; border: 1px solid #aaa; border-radius: 50%; background: radial-gradient(#888 0 3px, #fff 4px); }
.pointer { position: absolute; left: 32px; top: 560px; overflow: visible; }

.rail { width: 56px; border-left: 1px solid #d0cdcb; display: flex; flex-direction: column; align-items: center; gap: 8px; padding: 8px 1px 0 0; background: linear-gradient(#e9e5e2, #ece7e4); }
.rail .icon-btn { width: 32px; height: 32px; border-radius: 5px; }
.rail svg { width: 16px; height: 16px; overflow: visible; }
.rail .fold { height: 24px; padding-top: 8px; }
.on { background: #cfcbc9; }

.status { display: flex; align-items: center; justify-content: space-between; height: 24px; flex: none; border-top: 1px solid #cfc8c6; padding: 0 17px 0 16px; background: #ece3e1; }
.status-right { display: flex; align-items: center; gap: 14px; }
.status .sep { height: 16px; }
.move { gap: 7px; }
.view { width: 24px; height: 24px; margin: 0 -3px; }
.zoom-val { gap: 12px; margin-left: -1px; }
.bold-ico { stroke-width: 2; }
.full { margin-left: 4px; }

.ime { position: absolute; right: 4px; top: 933px; display: flex; align-items: center; justify-content: center; gap: 4px; width: 60px; height: 26px; background: #fff; border: 1px solid #aaa; border-radius: 5px; box-shadow: 0 2px 4px #0006; font-size: 13px; }
.watermark { position: absolute; right: 11px; bottom: 8px; display: flex; opacity: .8; pointer-events: none; }
.watermark svg { stroke: none; }
.watermark p { display: flex; flex-direction: column; margin: 0; }
.watermark b { font: 700 21px/25px "Noto Sans CJK SC", sans-serif; color: #4b8fd0; }
.watermark span { font: 17px/18px "Liberation Sans", sans-serif; color: #43b85f; }
```
